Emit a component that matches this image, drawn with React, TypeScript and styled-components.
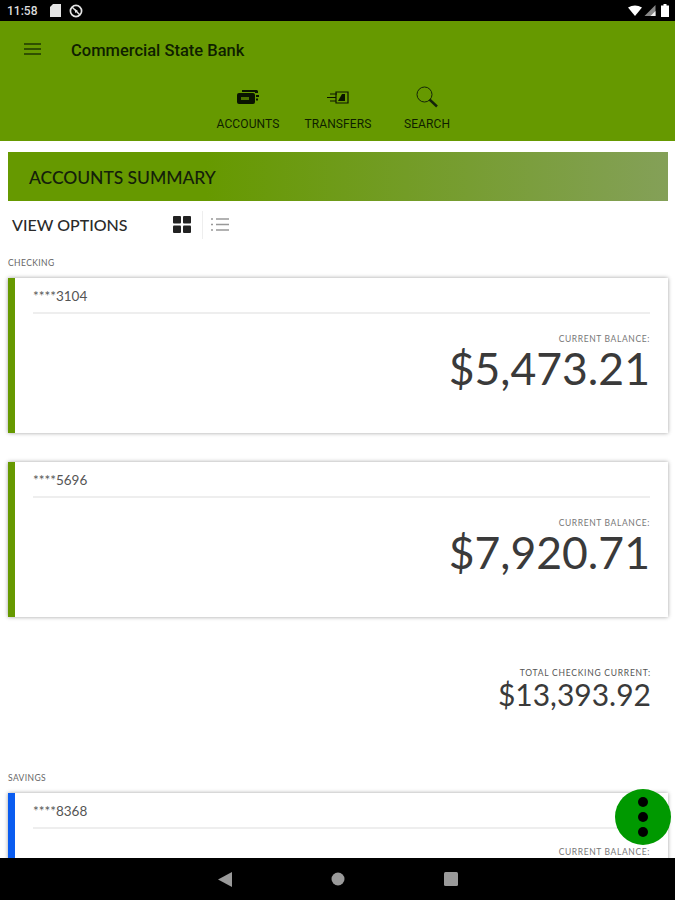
import React from "react";
import styled, { createGlobalStyle } from "styled-components";

const GlobalStyle = createGlobalStyle`
  * {
    margin: 0;
    padding: 0;
    box-sizing: border-box;
  }
  body {
    background: #fff;
    font-family: "Lato", "Liberation Sans", sans-serif;
  }
`;

const Screen = styled.div`
  position: relative;
  display: flex;
  flex-direction: column;
  width: 675px;
  height: 900px;
  overflow: hidden;
`;

const StatusBar = styled.div`
  display: flex;
  align-items: center;
  height: 21px;
  padding: 0 6px 0 7px;
  background: #000;
  color: #dcdcdc;
  font-family: "Roboto", sans-serif;
  font-size: 12px;
  font-weight: 500;
`;

const StatusLeft = styled.div`
  display: flex;
  align-items: center;
  gap: 8px;
  flex: 1;
`;

const StatusTime = styled.span`
  width: 35px;
`;

const StatusRight = styled.div`
  display: flex;
  align-items: center;
  gap: 2px;
`;

const Battery = styled.svg`
  margin-left: 3px;
`;

const Header = styled.header`
  height: 120px;
  background: #669900;
  color: #0f1f00;
  display: flex;
  flex-direction: column;
`;

const TitleRow = styled.div`
  display: flex;
  align-items: center;
  height: 62px;
  padding: 0 0 6px 24px;
`;

const Title = styled.h1`
  margin-left: 30px;
  padding-top: 2px;
  font-family: "Roboto", sans-serif;
  font-size: 16.5px;
  font-weight: 500;
`;

const NavRow = styled.nav`
  display: flex;
  justify-content: center;
  padding-right: 1px;
`;

const NavItem = styled.div<{ $width: number }>`
  display: flex;
  flex-direction: column;
  align-items: center;
  width: ${(p) => p.$width}px;
  font-family: "Roboto", sans-serif;
  font-size: 12px;
  letter-spacing: 0.1px;
`;

const NavIcon = styled.div`
  display: flex;
  align-items: center;
  justify-content: center;
  height: 28px;
  margin-bottom: 6px;
`;

const Content = styled.main`
  flex: 1;
  overflow: hidden;
  padding: 11px 7px 0 8px;
`;

const Banner = styled.div`
  display: flex;
  align-items: center;
  height: 49px;
  padding: 1px 0 0 21px;
  background: linear-gradient(90deg, #669900 0%, #669900 30%, #84a058 100%);
  color: #14200a;
  font-size: 17.5px;
  font-weight: 500;
  letter-spacing: -0.05px;
`;

const ViewOptions = styled.div`
  display: flex;
  align-items: center;
  height: 47px;
  padding-left: 4px;
`;

const ViewLabel = styled.span`
  width: 161px;
  color: #2a2a2a;
  font-size: 16px;
  font-weight: 500;
`;

const ViewButton = styled.div`
  display: flex;
  align-items: center;
  height: 28px;
  padding-right: 11px;
  & + & {
    padding-left: 8px;
    border-left: 1px solid #eee;
  }
`;

const SectionLabel = styled.div<{ $top: number }>`
  height: 13px;
  margin-top: ${(p) => p.$top}px;
  color: #666;
  font-size: 8.5px;
  letter-spacing: 0.4px;
  line-height: 13px;
`;

const Card = styled.section<{ $accent: string }>`
  display: flex;
  flex-direction: column;
  height: 155px;
  padding: 0 18px 0 18px;
  background: #fff;
  border-left: 7px solid ${(p) => p.$accent};
  box-shadow: 0 0 4px rgba(0, 0, 0, 0.38);
`;

const FirstCard = styled(Card)`
  margin-top: 8px;
`;

const NextCard = styled(Card)`
  margin-top: 29px;
`;

const SavingsCard = styled(Card)`
  margin-top: 8px;
`;

const AccountNumber = styled.div`
  height: 36px;
  border-bottom: 2px solid #eee;
  color: #555;
  font-size: 13.5px;
  line-height: 37px;
`;

const BalanceLabel = styled.div`
  margin-top: 20px;
  color: #777;
  font-size: 8.5px;
  letter-spacing: 0.62px;
  line-height: 11px;
  text-align: right;
`;

const SavingsBalanceLabel = styled(BalanceLabel)`
  margin-top: 18px;
`;

const Balance = styled.div`
  color: #3a3a3a;
  font-size: 44.5px;
  font-weight: 400;
  line-height: 46px;
  text-align: right;
`;

const Total = styled.div`
  height: 148px;
  padding: 51px 17px 0 0;
  text-align: right;
`;

const TotalLabel = styled.div`
  color: #555;
  font-size: 8.5px;
  letter-spacing: 0.75px;
  line-height: 11px;
`;

const TotalValue = styled.div`
  color: #3a3a3a;
  font-size: 30px;
  font-weight: 400;
  line-height: 31px;
`;

const Fab = styled.button`
  position: absolute;
  left: 615px;
  top: 789px;
  display: flex;
  flex-direction: column;
  align-items: center;
  justify-content: center;
  gap: 5px;
  width: 56px;
  height: 56px;
  border: none;
  border-radius: 50%;
  background: #009900;
`;

const FabDot = styled.span`
  width: 10px;
  height: 10px;
  border-radius: 50%;
  background: #000;
`;

const BottomBar = styled.div`
  display: flex;
  align-items: center;
  justify-content: center;
  gap: 99px;
  height: 42px;
  background: #000;
`;

const App = () => {
  return (
    <>
      <GlobalStyle />
      <Screen>
        <StatusBar>
          <StatusLeft>
            <StatusTime>11:58</StatusTime>
            <svg width="11" height="13" viewBox="0 0 11 13">
              <path d="M3 0h8v13H0V3z" fill="#e4e4e4" />
            </svg>
            <svg width="14" height="14" viewBox="0 0 14 14" fill="none" stroke="#e4e4e4">
              <circle cx="7" cy="7" r="5.6" strokeWidth="1.7" />
              <path d="M3 3l8 8" strokeWidth="1.5" />
              <path d="M6 5l3 2-3 2z" fill="#e4e4e4" stroke="none" />
            </svg>
          </StatusLeft>
          <StatusRight>
            <svg width="14" height="11" viewBox="0 0 14 11">
              <path d="M0 2.5Q7-1.500 14 2.500L7 11z" fill="#fff" />
            </svg>
            <svg width="12" height="11" viewBox="0 0 11 11">
              <path d="M11 0v11H0z" fill="#888" />
              <path d="M11 6v5H6z" fill="#eee" />
            </svg>
            <Battery width="8" height="13" viewBox="0 0 8 13">
              <path d="M2.500 0h3v1.500H8V13H0V1.500h2.500z" fill="#fff" />
            </Battery>
          </StatusRight>
        </StatusBar>
        <Header>
          <TitleRow>
            <svg width="17" height="14" viewBox="0 0 17 14" stroke="#1f3800" strokeWidth="1.6">
              <path d="M0 2h17M0 7h17M0 12h17" />
            </svg>
            <Title>Commercial State Bank</Title>
          </TitleRow>
          <NavRow>
            <NavItem $width={90}>
              <NavIcon>
                <svg width="22" height="14" viewBox="0 0 22 14">
                  <path d="M5 0h15l1 1v2h-3V2H5z" fill="#0a1400" />
                  <rect x="19" y="5" width="3" height="2" fill="#0a1400" />
                  <rect x="19" y="8.500" width="2" height="2" fill="#0a1400" />
                  <rect x="0" y="3" width="18" height="11" rx="2" fill="#0a1400" />
                  <path d="M4 7h8v3H4z" fill="#4d7300" />
                </svg>
              </NavIcon>
              ACCOUNTS
            </NavItem>
            <NavItem $width={90}>
              <NavIcon>
                <svg width="22" height="13" viewBox="0 0 22 13">
                  <path d="M9 1h12v11H9z" fill="none" stroke="#0a1400" strokeWidth="1.200" />
                  <path d="M11 10l4-7h3v7z" fill="#0a1400" />
                  <path d="M3 3h7M0 6.500h9M3 10h6" stroke="#0a1400" strokeWidth="1" />
                </svg>
              </NavIcon>
              TRANSFERS
            </NavItem>
            <NavItem $width={88}>
              <NavIcon>
                <svg width="22" height="22" viewBox="0 0 22 22" fill="none" stroke="#14240a">
                  <circle cx="8.500" cy="8.500" r="7.500" strokeWidth="1" />
                  <path d="M13.500 13.500L21 20.500" strokeWidth="2.400" />
                </svg>
              </NavIcon>
              SEARCH
            </NavItem>
          </NavRow>
        </Header>
        <Content>
          <Banner>ACCOUNTS SUMMARY</Banner>
          <ViewOptions>
            <ViewLabel>VIEW OPTIONS</ViewLabel>
            <ViewButton>
              <svg width="18" height="17" viewBox="0 0 18 17" fill="#222">
                <rect width="8" height="7.500" rx="1" />
                <rect x="10" width="8" height="7.500" rx="1" />
                <rect y="9.500" width="8" height="7.500" rx="1" />
                <rect x="10" y="9.500" width="8" height="7.500" rx="1" />
              </svg>
            </ViewButton>
            <ViewButton>
              <svg width="18" height="15" viewBox="0 0 18 15" stroke="#999" strokeWidth="1.500">
                <path d="M0 2h2M5 2h13M0 7.500h2M5 7.500h13M0 13h2M5 13h13" />
              </svg>
            </ViewButton>
          </ViewOptions>
          <SectionLabel $top={9}>CHECKING</SectionLabel>
          <FirstCard $accent="#669900">
            <AccountNumber>****3104</AccountNumber>
            <BalanceLabel>CURRENT BALANCE:</BalanceLabel>
            <Balance>$5,473.21</Balance>
          </FirstCard>
          <NextCard $accent="#669900">
            <AccountNumber>****5696</AccountNumber>
            <BalanceLabel>CURRENT BALANCE:</BalanceLabel>
            <Balance>$7,920.71</Balance>
          </NextCard>
          <Total>
            <TotalLabel>TOTAL CHECKING CURRENT:</TotalLabel>
            <TotalValue>$13,393.92</TotalValue>
          </Total>
          <SectionLabel $top={7}>SAVINGS</SectionLabel>
          <SavingsCard $accent="#0a5cf0">
            <AccountNumber>****8368</AccountNumber>
            <SavingsBalanceLabel>CURRENT BALANCE:</SavingsBalanceLabel>
          </SavingsCard>
        </Content>
        <Fab aria-label="More">
          <FabDot />
          <FabDot />
          <FabDot />
        </Fab>
        <BottomBar>
          <svg width="14" height="15" viewBox="0 0 14 15">
            <path d="M14 0v15L0 7.500z" fill="#9a9a9a" />
          </svg>
          <svg width="14" height="14" viewBox="0 0 14 14">
            <circle cx="7" cy="7" r="6.500" fill="#9a9a9a" />
          </svg>
          <svg width="14" height="14" viewBox="0 0 14 14">
            <rect width="14" height="14" rx="1.500" fill="#9a9a9a" />
          </svg>
        </BottomBar>
      </Screen>
    </>
  );
};

export default App;
